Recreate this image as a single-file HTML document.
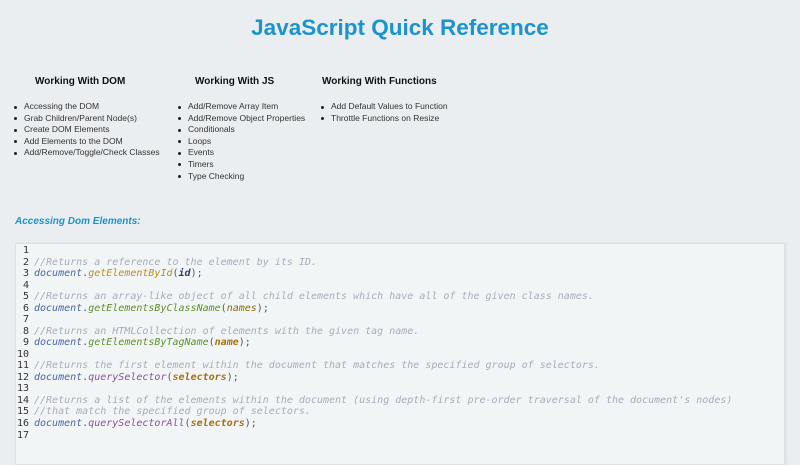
<!DOCTYPE html>
<html><head><style>
body{margin:0;width:800px;height:450px;overflow:hidden;background:#ebeef0;font-family:"Liberation Sans",sans-serif;position:relative}
h1{position:absolute;top:15px;left:0;width:800px;text-align:center;margin:0;font-size:22.5px;color:#1a93cf;font-weight:bold}
.col{position:absolute;top:76px}
.col h3{margin:0;font-size:10px;font-weight:bold;color:#111}
.col ul{margin:0;padding:0;list-style:none;position:absolute;top:25px;white-space:nowrap}
.col li{font-size:8.5px;line-height:11.6px;color:#333;padding-left:11px;position:relative}
.col li:before{content:"";position:absolute;left:1px;top:4.5px;width:3px;height:3px;border-radius:50%;background:#222}
h2{position:absolute;top:216px;left:15px;margin:0;font-size:10px;font-style:italic;font-weight:bold;color:#1a93cf}
.code{position:absolute;left:15px;top:243px;width:768px;height:220px;background:#f2f5f6;border:1px solid #dde2e4;box-shadow:1px 0 2px #d8dcde}
pre{margin:0;position:absolute;top:1px;font-family:"DejaVu Sans Mono",monospace;font-size:10px;line-height:11.53px}
.ln{left:1px;color:#333;text-align:right;width:12px}
.src{left:18px;color:#555}
.c{color:#aab;font-style:italic}
.d{color:#4a64a6;font-style:italic}
.o{color:#c08a14;font-style:italic}
.g{color:#5d8f2a;font-style:italic}
.p{color:#8a4fa0;font-style:italic}
.a{color:#8a6a10;font-style:italic}
.b{color:#2a3a80;font-weight:bold;font-style:italic}
.s{color:#a87010;font-weight:bold;font-style:italic}
</style></head><body>
<h1>JavaScript Quick Reference</h1>
<div class="col" style="left:35px"><h3>Working With DOM</h3>
<ul style="left:-22px"><li>Accessing the DOM</li><li>Grab Children/Parent Node(s)</li><li>Create DOM Elements</li><li>Add Elements to the DOM</li><li>Add/Remove/Toggle/Check Classes</li></ul></div>
<div class="col" style="left:195px"><h3>Working With JS</h3>
<ul style="left:-18px"><li>Add/Remove Array Item</li><li>Add/Remove Object Properties</li><li>Conditionals</li><li>Loops</li><li>Events</li><li>Timers</li><li>Type Checking</li></ul></div>
<div class="col" style="left:322px"><h3>Working With Functions</h3>
<ul style="left:-2px"><li>Add Default Values to Function</li><li>Throttle Functions on Resize</li></ul></div>
<h2>Accessing Dom Elements:</h2>
<div class="code">
<pre class="ln">1
2
3
4
5
6
7
8
9
10
11
12
13
14
15
16
17</pre>
<pre class="src">&#8203;
<span class="c">//Returns a reference to the element by its ID.</span>
<span class="d">document</span>.<span class="o">getElementById</span>(<span class="b">id</span>);

<span class="c">//Returns an array-like object of all child elements which have all of the given class names.</span>
<span class="d">document</span>.<span class="g">getElementsByClassName</span>(<span class="a">names</span>);

<span class="c">//Returns an HTMLCollection of elements with the given tag name.</span>
<span class="d">document</span>.<span class="g">getElementsByTagName</span>(<span class="s">name</span>);

<span class="c">//Returns the first element within the document that matches the specified group of selectors.</span>
<span class="d">document</span>.<span class="p">querySelector</span>(<span class="s">selectors</span>);

<span class="c">//Returns a list of the elements within the document (using depth-first pre-order traversal of the document's nodes)</span>
<span class="c">//that match the specified group of selectors.</span>
<span class="d">document</span>.<span class="p">querySelectorAll</span>(<span class="s">selectors</span>);
</pre>
</div>
</body></html>
